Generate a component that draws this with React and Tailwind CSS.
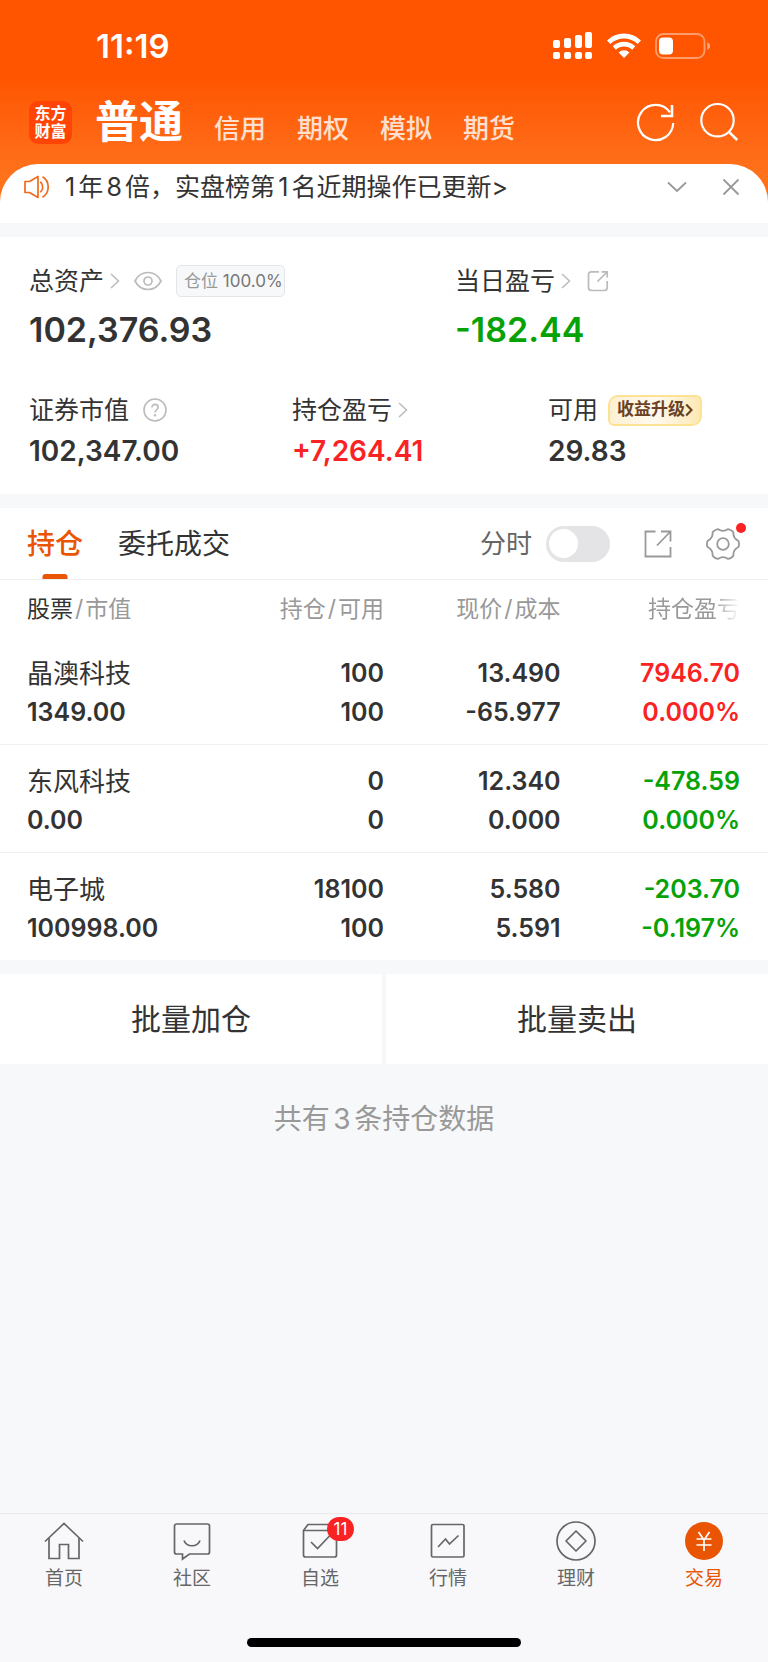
import { useState } from "react";

const markets = ["信用", "期权", "模拟", "期货"];

const holdings = [
  {
    name: "晶澳科技",
    value: "1349.00",
    amount: "100",
    usable: "100",
    price: "13.490",
    cost: "-65.977",
    profit: "7946.70",
    percent: "0.000%",
    up: true,
  },
  {
    name: "东风科技",
    value: "0.00",
    amount: "0",
    usable: "0",
    price: "12.340",
    cost: "0.000",
    profit: "-478.59",
    percent: "0.000%",
    up: false,
  },
  {
    name: "电子城",
    value: "100998.00",
    amount: "18100",
    usable: "100",
    price: "5.580",
    cost: "5.591",
    profit: "-203.70",
    percent: "-0.197%",
    up: false,
  },
];

// six flat teeth joined by shallow curves
const gearPath = () => {
  const at = (deg, r) => {
    const a = (deg * Math.PI) / 180;
    return `${(17 + r * Math.cos(a)).toFixed(2)} ${(17 + r * Math.sin(a)).toFixed(2)}`;
  };
  let d = `M${at(-11, 15.8)}`;
  for (let deg = 0; deg < 360; deg += 60) {
    d += `Q${at(deg, 16.6)} ${at(deg + 11, 15.8)}Q${at(deg + 30, 11.4)} ${at(deg + 49, 15.8)}`;
  }
  return `${d}Z`;
};

const SignalIcon = () => (
  <svg width="40" height="28" viewBox="0 0 40 28" fill="#fff" aria-hidden="true">
    <rect x="0" y="8" width="7" height="8" rx="2" />
    <rect x="11" y="6" width="7" height="10" rx="2" />
    <rect x="22" y="3" width="7" height="13" rx="2" />
    <rect x="32" y="0" width="7" height="16" rx="2" />
    <rect x="0" y="20" width="7" height="7" rx="2" />
    <rect x="11" y="20" width="7" height="7" rx="2" />
    <rect x="22" y="20" width="7" height="7" rx="2" />
    <rect x="32" y="20" width="7" height="7" rx="2" />
  </svg>
);

const WifiIcon = () => (
  <svg width="34" height="26" viewBox="0 0 34 26" fill="none" stroke="#fff" aria-hidden="true">
    <path d="M1.7 9.2a22 22 0 0 1 30.6 0" strokeWidth="4.8" />
    <path d="M7.3 15a14 14 0 0 1 19.4 0" strokeWidth="4.6" />
    <path d="M11.6 19.4a7.6 7.6 0 0 1 10.8 0L17 25z" fill="#fff" stroke="none" />
  </svg>
);

const BatteryIcon = () => (
  <svg width="56" height="26" viewBox="0 0 56 26" fill="none" aria-hidden="true">
    <rect x="1" y="1" width="48.5" height="24" rx="7.5" stroke="#fff" strokeOpacity="0.42" strokeWidth="1.8" />
    <rect x="4" y="4.5" width="14" height="17" rx="4" fill="#fff" />
    <path d="M52.3 9.2c3.6 1.4 3.6 6.2 0 7.6z" fill="#fff" fillOpacity="0.5" />
  </svg>
);

const RefreshIcon = () => (
  <svg width="40" height="40" viewBox="0 0 40 40" fill="none" stroke="#fff" strokeWidth="2.2" aria-hidden="true">
    <path d="M38.2 21A17.6 17.6 0 1 1 35 10.4" />
    <path d="M37 3v11H26" strokeWidth="2.6" />
  </svg>
);

const SearchIcon = () => (
  <svg width="40" height="40" viewBox="0 0 40 40" fill="none" stroke="#fff" strokeWidth="2.2" aria-hidden="true">
    <circle cx="18.5" cy="18.2" r="16.2" />
    <path d="M29.6 29.6l8.6 8.4" strokeWidth="2.6" />
  </svg>
);

const SpeakerIcon = () => (
  <svg width="26" height="24" viewBox="0 0 26 24" fill="none" stroke="#f26a1b" strokeWidth="1.7" strokeLinejoin="round" aria-hidden="true">
    <path d="M1 6.500h4.500L14 1.500v21L5.500 17.500H1z" />
    <path d="M16.300 6.800c3.200 2.400 3.200 8 0 10.400M18.500 1.800c7.600 4.400 7.600 16 0 20.400" />
  </svg>
);

const ChevronRight = () => (
  <svg width="10" height="16" viewBox="0 0 10 16" fill="none" stroke="#bbb" strokeWidth="1.5" aria-hidden="true">
    <path d="M1 1l7.5 7L1 15" />
  </svg>
);

const EyeIcon = () => (
  <svg width="28" height="20" viewBox="0 0 28 20" fill="none" stroke="#bbb" strokeWidth="1.7" aria-hidden="true">
    <path d="M1 10C4 4.200 8.600 1.500 14 1.500S24 4.200 27 10c-3 5.800-7.600 8.500-13 8.500S4 15.800 1 10z" />
    <circle cx="14" cy="10" r="4" />
  </svg>
);

const ShareIcon = () => (
  <svg width="22" height="22" viewBox="0 0 22 22" fill="none" stroke="#bbb" strokeWidth="1.7" aria-hidden="true">
    <path d="M12 1.800H4.500A3 3 0 0 0 1.500 4.800v12.700a3 3 0 0 0 3 3h12.700a3 3 0 0 0 3-3V11" />
    <path d="M14.500 1.800h5.700v5.700M20 2L10.500 11.500" />
  </svg>
);

const ExportIcon = () => (
  <svg width="28" height="28" viewBox="0 0 28 28" fill="none" stroke="#999" strokeWidth="1.8" aria-hidden="true">
    <path d="M11.500 1.500H1.500v25h25V17" />
    <path d="M17 1.500h9.500v10M26 2L13 15.500" />
  </svg>
);

const GearIcon = () => (
  <svg width="34" height="34" viewBox="0 0 34 34" fill="none" stroke="#999" strokeWidth="1.8" aria-hidden="true">
    <path d={gearPath()} strokeLinejoin="round" />
    <circle cx="17" cy="17" r="5.8" />
  </svg>
);

const HelpIcon = () => (
  <svg width="24" height="24" viewBox="0 0 24 24" fill="none" stroke="#bbb" strokeWidth="1.6" aria-hidden="true">
    <circle cx="12" cy="12" r="11" />
    <path d="M8.900 9.600C8.900 7.600 10.200 6.400 12 6.400s3.100 1.200 3.100 2.900c0 2.300-3.100 2.600-3.100 5.200" />
    <circle cx="12" cy="17.200" r="0.500" />
  </svg>
);

const navItems = [
  {
    label: "首页",
    icon: (
      <>
        <path d="M1 20.500L20 2.500l19 18" />
        <path d="M5 17v20.500h10.500V23.500h9v14H35V17" />
      </>
    ),
  },
  {
    label: "社区",
    icon: (
      <>
        <path d="M4.500 3h31a2 2 0 0 1 2 2v26a2 2 0 0 1-2 2H17.500l-7 5v-5H4.500a2 2 0 0 1-2-2V5a2 2 0 0 1 2-2z" />
        <path d="M12 19.500c2.500 7 13.500 7 16 0" />
      </>
    ),
  },
  {
    label: "自选",
    badge: "11",
    icon: (
      <>
        <path d="M3.500 9.500L8 3.500h27l1.500 6V34a2 2 0 0 1-2 2h-29a2 2 0 0 1-2-2z" />
        <path d="M3.500 9.500h33" />
        <path d="M11 21l6.500 6.500L30 14.500" />
      </>
    ),
  },
  {
    label: "行情",
    icon: (
      <>
        <rect x="3.500" y="3.500" width="32.500" height="32.500" rx="1.500" />
        <path d="M10 26l7.500-8 4 5L30.500 14.500" />
      </>
    ),
  },
  {
    label: "理财",
    icon: (
      <>
        <circle cx="20" cy="20" r="19" />
        <path d="M20 10l10 10-10 10-10-10z" strokeLinejoin="round" />
      </>
    ),
  },
  {
    label: "交易",
    active: true,
    icon: (
      <>
        <circle cx="20" cy="20" r="19" fill="#ea5504" stroke="none" />
        <path d="M14.500 11l5.500 8 5.500-8M20 19v11M12.500 18h15M12.500 24h15" stroke="#fff" />
      </>
    ),
  },
];

const Label = ({ children }) => (
  <span className="text-[25px] leading-8 whitespace-nowrap">{children}</span>
);

const Header = () => (
  <header>
    <div className="h-[88px] pt-1 pl-24 pr-[57px] flex items-center justify-between text-white">
      <time className="text-[33px] leading-9 font-semibold">11:19</time>
      <div className="flex items-center gap-3.5">
        <SignalIcon />
        <WifiIcon />
        <BatteryIcon />
      </div>
    </div>
    <div className="h-[76px] px-[29px] pb-2 flex items-center text-white">
      <div className="size-[43px] rounded-[9px] bg-[#ff4405] flex flex-col items-center justify-center text-[16px] leading-[18px] font-bold">
        <span>东方</span>
        <span>财富</span>
      </div>
      <nav className="ml-[23px] flex items-baseline gap-[31px]">
        <a href="#normal" className="text-[44px] leading-[60px] font-bold">
          普通
        </a>
        {markets.map((item) => (
          <a key={item} href={`#${item}`} className="text-[26px] leading-9 font-medium text-[#ffe0d0]">
            {item}
          </a>
        ))}
      </nav>
      <div className="ml-auto flex gap-6">
        <button aria-label="刷新">
          <RefreshIcon />
        </button>
        <button aria-label="搜索">
          <SearchIcon />
        </button>
      </div>
    </div>
  </header>
);

const Notice = () => (
  <div className="h-[59px] pb-3.5 pl-6 pr-7 flex items-center rounded-t-[38px] bg-white">
    <SpeakerIcon />
    <a href="#rank" className="ml-[15px] text-[25px] leading-8 [text-autospace:normal]">
      1年8倍，实盘榜第1名近期操作已更新&gt;
    </a>
    <div className="ml-auto flex items-center gap-[35px]">
      <button aria-label="展开">
        <svg width="20" height="12" viewBox="0 0 20 12" fill="none" stroke="#999" strokeWidth="1.8">
          <path d="M1 1.500l9 8.500 9-8.500" />
        </svg>
      </button>
      <button aria-label="关闭">
        <svg width="18" height="18" viewBox="0 0 18 18" fill="none" stroke="#999" strokeWidth="1.8">
          <path d="M1.500 1.500l15 15M16.500 1.500l-15 15" />
        </svg>
      </button>
    </div>
  </div>
);

const Assets = () => (
  <section className="mt-3.5 px-[29px] pt-7 pb-[26px] bg-white">
    <div className="grid grid-cols-[426fr_284fr]">
      <div>
        <div className="flex items-center">
          <Label>总资产</Label>
          <span className="ml-1.5">
            <ChevronRight />
          </span>
          <button aria-label="隐藏资产" className="ml-3.5">
            <EyeIcon />
          </button>
          <span className="ml-3.5 h-8 pl-[7px] pr-px border border-[#e4e5e8] rounded-[5px] bg-[#f7f8fa] text-[17px] leading-[30px] whitespace-nowrap text-[#777]">
            <span className="text-[#999]">仓位</span> 100.0%
          </span>
        </div>
        <p className="mt-3 text-[34px] leading-[42px] font-semibold">102,376.93</p>
      </div>
      <div>
        <div className="flex items-center">
          <Label>当日盈亏</Label>
          <span className="ml-1.5">
            <ChevronRight />
          </span>
          <button aria-label="分享" className="ml-4">
            <ShareIcon />
          </button>
        </div>
        <p className="mt-3 text-[34px] leading-[42px] font-semibold text-[#06a206]">-182.44</p>
      </div>
    </div>
    <div className="mt-[43px] grid grid-cols-[263fr_256fr_191fr]">
      <div>
        <div className="flex items-center">
          <Label>证券市值</Label>
          <button aria-label="说明" className="ml-3.5">
            <HelpIcon />
          </button>
        </div>
        <p className="mt-2 text-[28px] leading-[34px] font-semibold">102,347.00</p>
      </div>
      <div>
        <div className="flex items-center">
          <Label>持仓盈亏</Label>
          <span className="ml-1.5">
            <ChevronRight />
          </span>
        </div>
        <p className="mt-2 text-[28px] leading-[34px] font-semibold text-[#fa2222]">+7,264.41</p>
      </div>
      <div>
        <div className="flex items-center">
          <Label>可用</Label>
          <a
            href="#upgrade"
            className="ml-2.5 h-[31px] px-[7px] flex items-center rounded-tl-[10px] rounded-br-[10px] rounded-tr-[6px] rounded-bl-[6px] border-2 border-[#fde293] bg-linear-to-r from-[#fdf0d2] via-[#fffaf0] to-[#fde9b4] text-[17px] font-bold whitespace-nowrap text-[#6b4226]"
          >
            收益升级
            <svg width="8" height="14" viewBox="0 0 8 14" fill="none" stroke="#6b4226" strokeWidth="2.2" aria-hidden="true">
              <path d="M1.200 1.500L6.500 7l-5.300 5.500" />
            </svg>
          </a>
        </div>
        <p className="mt-2 text-[28px] leading-[34px] font-semibold">29.83</p>
      </div>
    </div>
  </section>
);

const Holdings = () => {
  const [timeline, setTimeline] = useState(false);

  return (
    <section className="mt-3.5 bg-white">
      <div className="h-[72px] pl-[27px] pr-7 flex items-center border-b border-[#f0f0f2]">
        <button className="relative h-full text-[28px] font-medium text-[#ea5504]">
          持仓
          <span className="absolute bottom-0 left-1/2 -translate-x-1/2 w-[25px] h-[5px] rounded-t-[3px] bg-[#ea5504]" />
        </button>
        <button className="ml-[35px] h-full text-[28px]">委托成交</button>
        <div className="ml-auto flex items-center">
          <label htmlFor="timeline" className="text-[26px] leading-9 text-[#666]">
            分时
          </label>
          <input
            id="timeline"
            type="checkbox"
            checked={timeline}
            onChange={(e) => setTimeline(e.target.checked)}
            className="ml-3.5 w-16 h-9 p-[3px] appearance-none rounded-full bg-[#e4e4e6] checked:bg-[#ea5504] flex items-center checked:justify-end before:block before:size-[29px] before:rounded-full before:bg-white"
          />
          <button aria-label="导出" className="ml-[34px]">
            <ExportIcon />
          </button>
          <button aria-label="设置" className="relative ml-[34px]">
            <GearIcon />
            <span className="absolute -top-1 -right-1.5 size-2.5 rounded-full bg-[#fa2222]" />
          </button>
        </div>
      </div>
      <table className="w-full table-fixed">
        <colgroup>
          <col className="w-[27%]" />
          <col className="w-[23%]" />
          <col className="w-[23%]" />
          <col className="w-[27%]" />
        </colgroup>
        <thead>
          <tr className="h-[57px] text-[23px] leading-8 whitespace-nowrap text-[#999]">
            <th className="pl-[27px] text-left font-normal">
              <span className="text-[#333]">股票</span>
              <span className="px-0.5">/</span>市值
            </th>
            <th className="text-right font-normal">
              持仓<span className="px-0.5">/</span>可用
            </th>
            <th className="text-right font-normal">
              现价<span className="px-0.5">/</span>成本
            </th>
            <th className="pr-7 text-right font-normal">
              <span className="mask-r-from-70% mask-r-to-100%">持仓盈亏</span>
            </th>
          </tr>
        </thead>
        <tbody className="text-[25px] leading-[39px] font-semibold">
          {holdings.map((item) => (
            <tr key={item.name} className="border-b border-[#f0f0f2] last:border-0">
              <td className="pl-[27px] pt-[17px] pb-3">
                <p className="text-[26px] font-normal">{item.name}</p>
                <p>{item.value}</p>
              </td>
              <td className="pt-[17px] pb-3 text-right">
                <p>{item.amount}</p>
                <p>{item.usable}</p>
              </td>
              <td className="pt-[17px] pb-3 text-right">
                <p>{item.price}</p>
                <p>{item.cost}</p>
              </td>
              <td className={`pt-[17px] pb-3 pr-7 text-right ${item.up ? "text-[#fa2222]" : "text-[#06a206]"}`}>
                <p>{item.profit}</p>
                <p>{item.percent}</p>
              </td>
            </tr>
          ))}
        </tbody>
      </table>
    </section>
  );
};

const TabBar = () => (
  <footer className="mt-auto border-t border-[#ebebed] bg-[#f8f8fb]">
    <nav className="pt-[7px] grid grid-cols-6">
      {navItems.map((item) => (
        <a
          key={item.label}
          href={`#${item.label}`}
          className={`flex flex-col items-center text-[19px] leading-6 ${item.active ? "text-[#ea5504]" : "text-[#666]"}`}
        >
          <span className="relative">
            <svg width="40" height="40" viewBox="0 0 40 40" fill="none" stroke="#666" strokeWidth="1.7" aria-hidden="true">
              {item.icon}
            </svg>
            {item.badge && (
              <span className="absolute -top-1 left-[27px] w-[27px] h-6 rounded-full bg-[#fa2222] text-center text-[17px] leading-6 text-white">
                {item.badge}
              </span>
            )}
          </span>
          <span className="mt-1.5">{item.label}</span>
        </a>
      ))}
    </nav>
    <div className="mt-[47px] mb-[15px] mx-auto w-[274px] h-[9px] rounded-full bg-black" />
  </footer>
);

const App = () => {
  return (
    <div className="min-h-screen flex flex-col bg-[#f7f8fa] font-[Inter,'Noto_Sans_CJK_SC',sans-serif] text-[#333]">
      <div className="bg-linear-to-b from-[#ff5500] from-35% to-[#ff721c] to-80%">
        <Header />
        <Notice />
      </div>
      <Assets />
      <Holdings />
      <div className="mt-3.5 grid grid-cols-2 gap-1">
        <button className="h-[90px] bg-white text-[30px]">批量加仓</button>
        <button className="h-[90px] bg-white text-[30px]">批量卖出</button>
      </div>
      <p className="mt-[35px] text-center text-[28px] leading-10 text-[#999] [text-autospace:normal]">共有3条持仓数据</p>
      <TabBar />
    </div>
  );
};

export default App;
